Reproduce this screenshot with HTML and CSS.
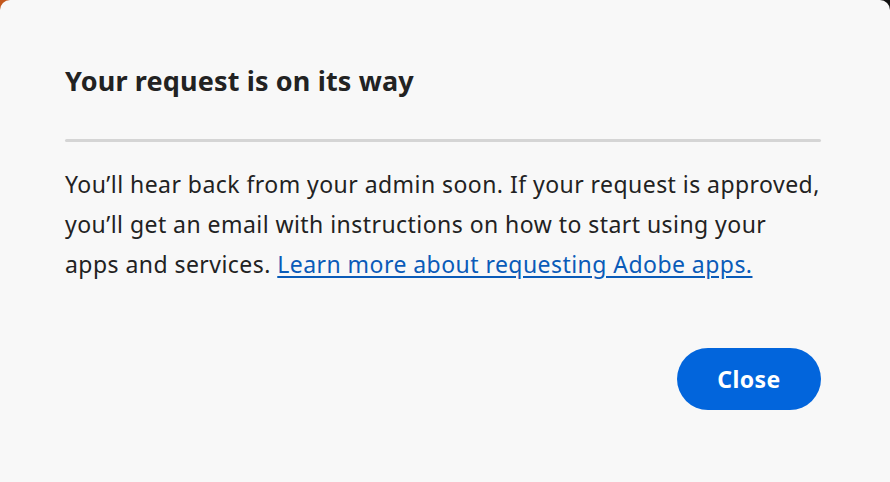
FILE: index.html
```html
<!DOCTYPE html>
<html lang="en">
<head>
<meta charset="utf-8">
<title>Your request is on its way</title>
<link rel="stylesheet" href="styles.css">
</head>
<body>
<div class="dialog">
  <h1 class="dialog-title">Your request is on its way</h1>
  <div class="divider"></div>
  <p class="dialog-body">You’ll hear back from your admin soon. If your request is approved, you’ll get an email with instructions on how to start using your<br>apps and services. <a class="link" href="#">Learn more about requesting Adobe apps.</a></p>
  <div class="actions">
    <button class="btn-primary" type="button">Close</button>
  </div>
</div>
</body>
</html>
```

FILE: styles.css
```css
html, body {
  margin: 0;
  padding: 0;
  height: 100%;
}
body {
  background: linear-gradient(90deg, #c4581c 0%, #5a3a20 50%, #111 100%);
  font-family: "Noto Sans", sans-serif;
}
.dialog {
  box-sizing: border-box;
  min-height: 100%;
  background: #f8f8f8;
  border-radius: 10px 10px 0 0;
  padding: 64px 69px 0 65px;
  display: flex;
  flex-direction: column;
}
.dialog-title {
  margin: 0;
  font-size: 27px;
  line-height: 34px;
  letter-spacing: 0.15px;
  font-weight: 700;
  color: #222;
}
.divider {
  margin-top: 41px;
  height: 3px;
  border-radius: 2px;
  background: #d5d5d5;
}
.dialog-body {
  margin: 22px 0 0;
  font-size: 23px;
  line-height: 40px;
  letter-spacing: 0.45px;
  color: #222;
}
.link {
  color: #0a5bb8;
  text-decoration: underline;
  text-underline-offset: 3px;
}
.actions {
  display: flex;
  justify-content: flex-end;
  margin-top: 64px;
}
.btn-primary {
  width: 144px;
  height: 62px;
  border: none;
  border-radius: 31px;
  background: #0265dc;
  color: #fff;
  font-family: "Noto Sans", sans-serif;
  font-size: 23px;
  letter-spacing: 0.4px;
  font-weight: 700;
  padding: 0;
  cursor: pointer;
}
```
